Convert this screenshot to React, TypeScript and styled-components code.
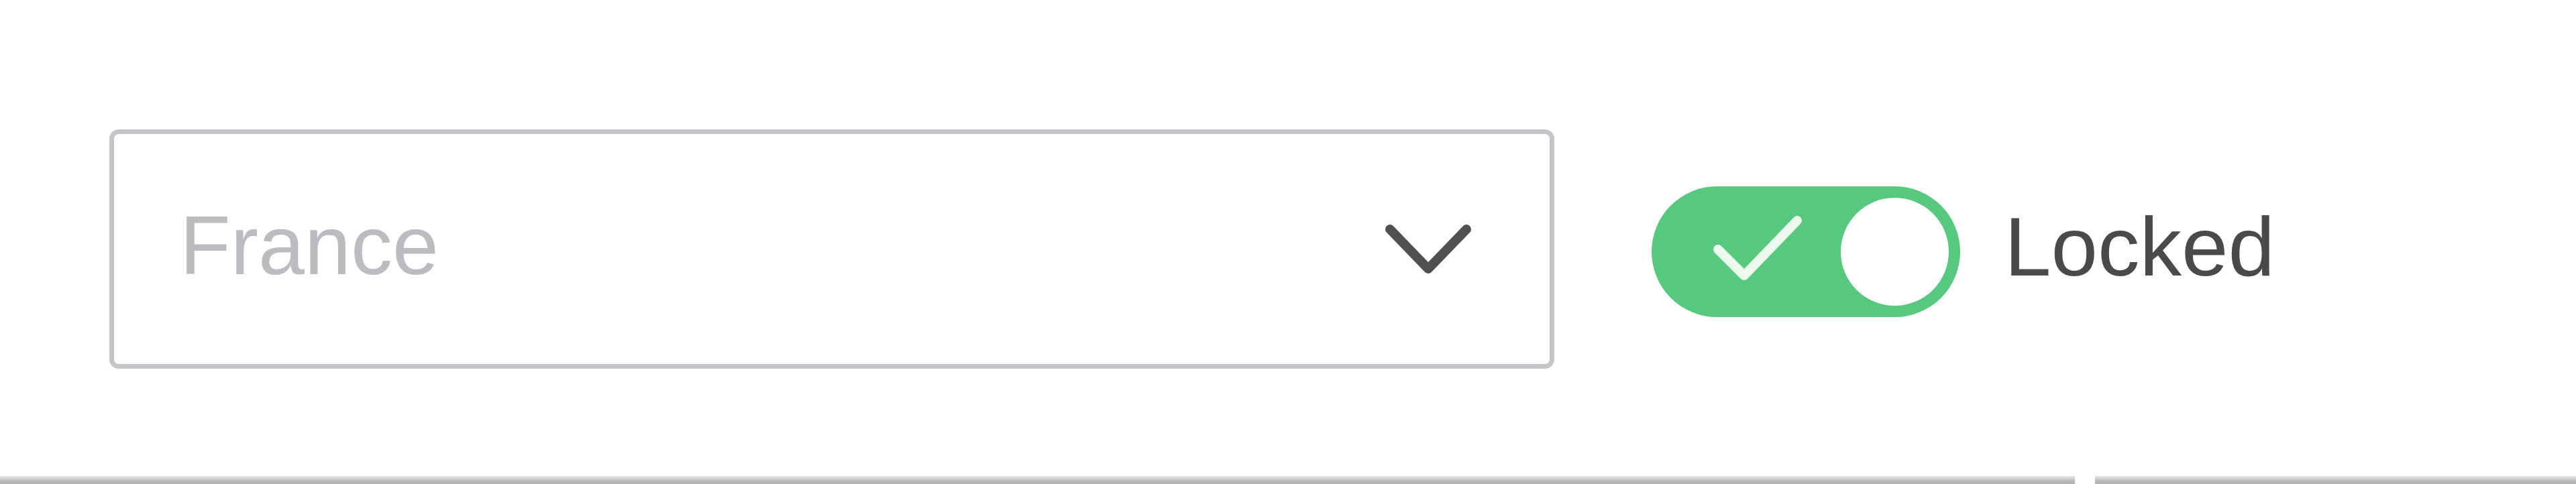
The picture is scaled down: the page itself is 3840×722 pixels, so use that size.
import React from "react";
import styled, { createGlobalStyle } from "styled-components";

const GlobalStyle = createGlobalStyle`
  html, body {
    margin: 0;
    padding: 0;
    background: #ffffff;
  }
  body {
    font-family: "Liberation Sans", Arial, sans-serif;
  }
`;

const Page = styled.div`
  width: 3840px;
  height: 722px;
  display: flex;
  flex-direction: column;
  background: #ffffff;
  overflow: hidden;
`;

const Row = styled.div`
  flex: 1;
  display: flex;
  align-items: flex-start;
  padding: 193px 0 0 163px;
`;

const SelectField = styled.div`
  box-sizing: border-box;
  width: 2154px;
  height: 357px;
  border: 7px solid #c5c5c9;
  border-radius: 14px;
  display: flex;
  align-items: center;
  justify-content: space-between;
  padding: 0 117px 12px 98px;
  background: #ffffff;
`;

const Placeholder = styled.span`
  font-family: "Liberation Sans", Arial, sans-serif;
  font-size: 124px;
  line-height: 1;
  color: #bcbcc0;
`;

const Chevron = styled.svg`
  width: 128px;
  height: 73px;
  margin-bottom: -12px;
  flex-shrink: 0;
  overflow: visible;
`;

const Toggle = styled.div`
  box-sizing: border-box;
  margin: 85px 0 0 145px;
  width: 460px;
  height: 195px;
  border-radius: 98px;
  background: #57c97f;
  display: flex;
  align-items: center;
  padding: 0 17px 0 92px;
`;

const Check = styled.svg`
  width: 132px;
  height: 195px;
  flex-shrink: 0;
  overflow: visible;
`;

const Knob = styled.div`
  margin-left: auto;
  width: 161px;
  height: 161px;
  border-radius: 50%;
  background: #ffffff;
`;

const Label = styled.span`
  margin: 112px 0 0 66px;
  font-family: "Liberation Sans", Arial, sans-serif;
  font-size: 125px;
  line-height: 1;
  color: #4a4a4c;
`;

const Rule = styled.div`
  display: flex;
  height: 12px;
  gap: 30px;
`;

const RuleSegment = styled.div<{ $width?: number }>`
  height: 100%;
  flex: ${(p) => (p.$width ? `0 0 ${p.$width}px` : "1")};
  background: linear-gradient(#ececec, #b9b9b9 60%, #b3b3b3);
`;

export default function App() {
  return (
    <>
      <GlobalStyle />
      <Page>
        <Row>
          <SelectField>
            <Placeholder>France</Placeholder>
            <Chevron viewBox="0 0 128 73">
              <path
                d="M7 7 L64 66 L121 7"
                fill="none"
                stroke="#505052"
                strokeWidth="14"
                strokeLinecap="round"
                strokeLinejoin="round"
              />
            </Chevron>
          </SelectField>
          <Toggle>
            <Check viewBox="0 0 132 195">
              <path
                d="M7 94 L46 133 L125 51"
                fill="none"
                stroke="#ecfbee"
                strokeWidth="14"
                strokeLinecap="round"
                strokeLinejoin="round"
              />
            </Check>
            <Knob />
          </Toggle>
          <Label>Locked</Label>
        </Row>
        <Rule>
          <RuleSegment $width={3093} />
          <RuleSegment />
        </Rule>
      </Page>
    </>
  );
}
